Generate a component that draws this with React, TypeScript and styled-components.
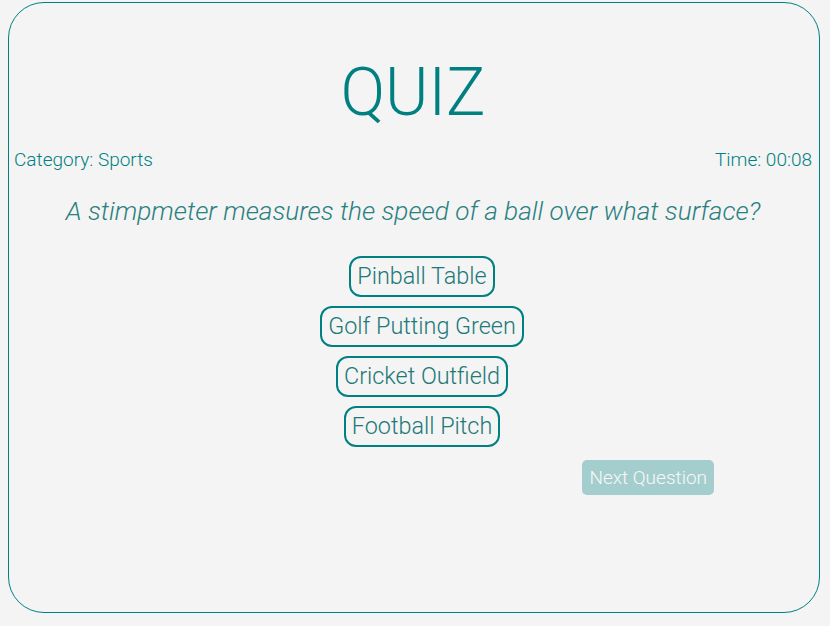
import React from 'react';
import styled, { createGlobalStyle } from 'styled-components';

const GlobalStyle = createGlobalStyle`
  html, body {
    margin: 0;
    background-color: #f4f4f4;
  }
  body {
    font-family: Roboto, "Liberation Sans", sans-serif;
    font-weight: 300;
  }
`;

const Card = styled.div`
  box-sizing: border-box;
  margin: 2px 0 0 8px;
  width: 812px;
  height: 611px;
  border: 1px solid #008080;
  border-radius: 36px;
  padding: 0 7px 0 5px;
  display: flex;
  flex-direction: column;
  color: #008080;
`;

const Title = styled.h1`
  margin: 50px 0 0;
  text-align: center;
  font-size: 66px;
  font-weight: 300;
  line-height: 80px;
  color: #008080;
`;

const InfoRow = styled.div`
  display: flex;
  justify-content: space-between;
  margin-top: 15px;
  font-size: 19px;
  line-height: 24px;
`;

const Question = styled.p`
  margin: 22px 0 0;
  text-align: center;
  font-size: 26.2px;
  font-style: italic;
  line-height: 34px;
  color: #2a8080;
`;

const Options = styled.div`
  display: flex;
  flex-direction: column;
  align-items: center;
  gap: 9px;
  margin: 28px 0 0 18px;
`;

const Option = styled.button`
  font-family: inherit;
  font-weight: 300;
  font-size: 23.4px;
  line-height: 29px;
  color: #207878;
  background: transparent;
  border: 2px solid #008080;
  border-radius: 12px;
  padding: 4px 6px;
  cursor: pointer;
`;

const Footer = styled.div`
  display: flex;
  justify-content: flex-end;
  padding-right: 98px;
  margin-top: 13px;
`;

const NextButton = styled.button<{ $disabled?: boolean }>`
  font-family: inherit;
  font-weight: 300;
  font-size: 19px;
  line-height: 23px;
  color: #fff;
  background: #008080;
  opacity: ${(p) => (p.$disabled ? 0.32 : 1)};
  border: none;
  border-radius: 5px;
  padding: 6px 7px;
`;

const answers = ['Pinball Table', 'Golf Putting Green', 'Cricket Outfield', 'Football Pitch'];

export default function App() {
  return (
    <>
      <GlobalStyle />
      <Card>
        <Title>QUIZ</Title>
        <InfoRow>
          <span>Category: Sports</span>
          <span>Time: 00:08</span>
        </InfoRow>
        <Question>A stimpmeter measures the speed of a ball over what surface?</Question>
        <Options>
          {answers.map((a) => (
            <Option key={a}>{a}</Option>
          ))}
        </Options>
        <Footer>
          <NextButton $disabled>Next Question</NextButton>
        </Footer>
      </Card>
    </>
  );
}
